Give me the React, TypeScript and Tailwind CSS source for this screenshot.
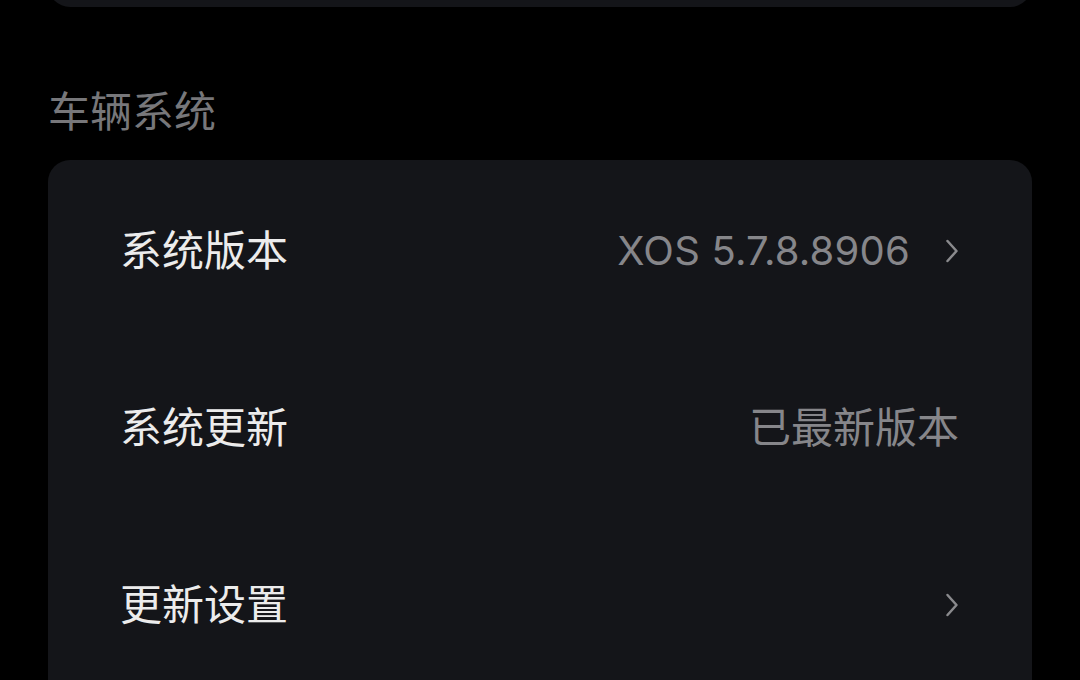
import React from "react";

function Chevron() {
  return (
    <svg width="14" height="26" viewBox="0 0 14 26" fill="none" className="ml-[35px]">
      <path d="M2.5 3 L11.5 13 L2.5 23" stroke="#8a8a8d" strokeWidth="2.5" strokeLinecap="round" strokeLinejoin="round" />
    </svg>
  );
}

function Row({ label, value, chevron, latin }: { label: string; value?: string; chevron?: boolean; latin?: boolean }) {
  return (
    <div className="flex h-[177px] items-center justify-between pl-[72px] pr-[73px]">
      <span className="text-[42px] leading-none text-[#ececec]">{label}</span>
      <div className="flex items-center">
        {value && (
          <span className={(latin ? "text-[40px] tracking-[0.2px]" : "text-[42px]") + " leading-none text-[#86868a]"}>
            {value}
          </span>
        )}
        {chevron && <Chevron />}
      </div>
    </div>
  );
}

export default function App() {
  return (
    <div
      className="h-[680px] w-[1080px] overflow-hidden bg-black"
      style={{ fontFamily: 'Inter, "Noto Sans CJK SC", sans-serif' }}
    >
      <div className="mx-[48px] -mt-[60px] h-[67px] rounded-[22px] bg-[#141519]" />
      <div className="px-[48px] pt-[78px] pb-[22px] text-[42px] leading-[53px] text-[#77777a]">车辆系统</div>
      <div className="mx-[48px] rounded-[22px] bg-[#141519] pt-[2px] pb-[40px]">
        <Row label="系统版本" value="XOS 5.7.8.8906" chevron latin />
        <Row label="系统更新" value="已最新版本" />
        <Row label="更新设置" chevron />
      </div>
    </div>
  );
}
